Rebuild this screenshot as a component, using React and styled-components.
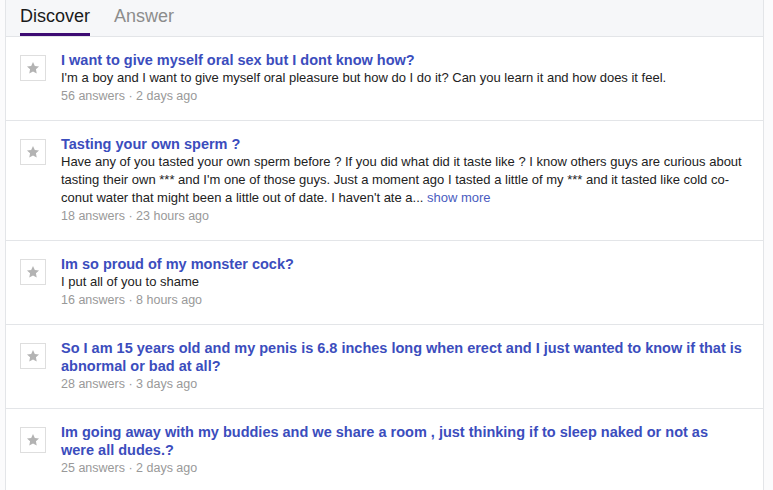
import styled, { createGlobalStyle } from "styled-components";

const Global = createGlobalStyle`
  body {
    margin: 0;
    background: #fbfbfc;
    font-family: "Liberation Sans", Arial, sans-serif;
  }
`;

const questions = [
  {
    title: "I want to give myself oral sex but I dont know how?",
    body: "I'm a boy and I want to give myself oral pleasure but how do I do it? Can you learn it and how does it feel.",
    answers: 56,
    when: "2 days ago",
  },
  {
    title: "Tasting your own sperm ?",
    body: "Have any of you tasted your own sperm before ? If you did what did it taste like ? I know others guys are curious about tasting their own *** and I'm one of those guys. Just a moment ago I tasted a little of my *** and it tasted like cold co-conut water that might been a little out of date. I haven't ate a...",
    more: true,
    answers: 18,
    when: "23 hours ago",
  },
  {
    title: "Im so proud of my monster cock?",
    body: "I put all of you to shame",
    answers: 16,
    when: "8 hours ago",
  },
  {
    title: "So I am 15 years old and my penis is 6.8 inches long when erect and I just wanted to know if that is abnormal or bad at all?",
    answers: 28,
    when: "3 days ago",
  },
  {
    title: "Im going away with my buddies and we share a room , just thinking if to sleep naked or not as were all dudes.?",
    answers: 25,
    when: "2 days ago",
  },
];

function Star() {
  return (
    <svg width="14" height="14" viewBox="0 0 24 24">
      <path
        d="M12 1.8l3.1 6.6 7.2.9-5.3 5 1.4 7.1L12 17.9l-6.4 3.5 1.4-7.1-5.3-5 7.2-.9z"
        fill="#b3b3b3"
      />
    </svg>
  );
}

export default function App() {
  return (
    <>
      <Global />
      <Panel>
        <Tabs>
          <Tab active>Discover</Tab>
          <Tab>Answer</Tab>
        </Tabs>
        {questions.map((q, i) => (
          <Item key={i}>
            <StarBox>
              <Star />
            </StarBox>
            <Content>
              <Title>{q.title}</Title>
              {q.body && (
                <Body>
                  {q.body}
                  {q.more && " "}
                  {q.more && <More>show more</More>}
                </Body>
              )}
              <Meta>
                {q.answers} answers · {q.when}
              </Meta>
            </Content>
          </Item>
        ))}
      </Panel>
    </>
  );
}

const Panel = styled.div`
  margin-left: 5px;
  width: 757px;
  background: #fff;
  border-left: 1px solid #e3e5e8;
  border-right: 1px solid #e3e5e8;
  border-bottom: 1px solid #e3e5e8;
`;

const Tabs = styled.div`
  display: flex;
  gap: 24px;
  height: 37px;
  padding-left: 14px;
  background: #f6f7f9;
  border-bottom: 1px solid #e3e5e8;
  box-sizing: border-box;
`;

const Tab = styled.div`
  font-size: 18px;
  line-height: 32px;
  height: 36px;
  box-sizing: border-box;
  color: ${({ active }) => (active ? "#1a1a1a" : "#8c8c8c")};
  border-bottom: 3px solid ${({ active }) => (active ? "#3d0b73" : "transparent")};
`;

const Item = styled.div`
  display: flex;
  gap: 15px;
  padding: 14px 20px 15px 14px;
  & + & {
    border-top: 1px solid #e3e5e8;
  }
`;

const StarBox = styled.div`
  flex: none;
  width: 24px;
  height: 24px;
  margin-top: 4px;
  border: 1px solid #dedede;
  display: flex;
  align-items: center;
  justify-content: center;
`;

const Content = styled.div`
  flex: 1;
  line-height: 18px;
`;

const Title = styled.div`
  font-size: 14.5px;
  font-weight: bold;
  color: #3b4dbd;
`;

const Body = styled.div`
  font-size: 13px;
  color: #222;
`;

const More = styled.span`
  color: #4a5cc0;
`;

const Meta = styled.div`
  font-size: 12.5px;
  color: #999;
`;
